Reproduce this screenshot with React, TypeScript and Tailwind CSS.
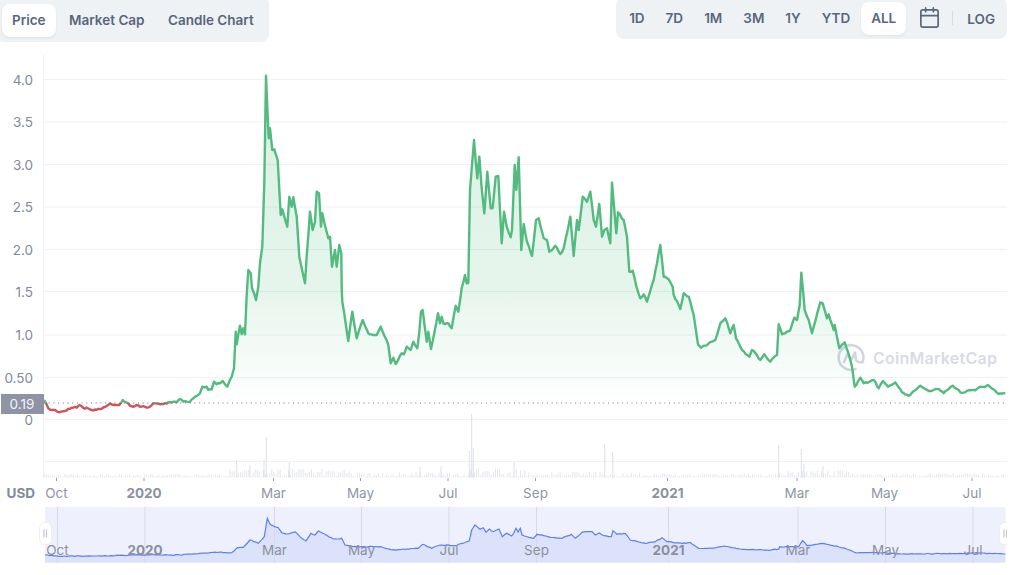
import { Calendar } from "lucide-react";

const pricePts = "44,400 48.3,408.3 53,410 59.3,412.3 65,411 71.7,407.7 76.7,407.7 79.3,405 83,407.7 91.7,410 100,409 108.3,405 110,403.3 115,405 119,405 122.7,400 128,403.3 132.7,406.7 136.7,405 140,406.7 150,406.7 153.3,403.3 160,404.3 170,402.3 176.7,402.3 180,399 183.3,401.7 190,401.7 195,396.7 200,393.3 202.3,386.7 206.7,386.7 208.3,390 211.7,389.3 214,381.7 216.7,384.3 220,383.3 222.7,381 227.3,386.7 231.7,376.7 234,368.3 235.7,331.7 236.7,344.3 240,325.7 241.7,334.3 243.3,328.3 245,334.3 246.7,295 248.3,270 250.7,273.3 252,288 256,300 258.3,286.7 260,263 262.3,246.7 264.3,183 266,75.7 267.7,116.7 268.7,138.3 270,128.3 272.3,150 274.3,149.3 277.7,160 280.7,215 282.3,209.3 287.3,226.7 289.3,196.7 291.7,206.7 293.3,197.3 296.7,216.7 299.3,256.7 305,283.3 306.7,256 310,211.7 312.7,230 315,221.7 316.7,191.7 319,193.3 321,226.7 322.3,213.3 328.3,238.3 330,236.7 332,266.7 335,250 336.7,266.7 339.3,245 341.3,253.3 341.7,288 342.3,301.7 344,311.7 348.3,341 352.3,311.7 356.7,338.3 362.7,320 368.3,333.3 376.7,335 380.7,326.7 388.3,345 390.7,363.3 393.3,357.7 395.7,364 401.7,353.3 404,354.3 406.7,346.7 410.7,350 413.3,341.7 417.3,348.3 419,335 421,311.7 422.7,310 426.7,341.7 428.3,331.7 431,349 438,313.3 440,323.3 441.7,316.7 443.3,323.3 448.3,323.3 451.7,328.3 455.7,305.7 458.3,311.7 461.7,288 465,275 466.7,283.3 468.3,283 470,190 474,140 477.3,178.3 479.3,156.7 481.7,188.3 484.3,213.3 487.3,171.7 490.7,208.3 492.7,208 495.7,176.7 498.3,176 501.7,243.3 504,211.7 506.7,226.7 510.7,237.3 512,230 514.7,165 516.3,190 518.7,157.3 521.3,250 523.7,224 527,241.7 532,256 536,220 538.7,218.3 543.7,238.3 547,240 549.3,251.7 552,250 555.3,245.7 560.3,254 563.7,248.3 570.3,216.7 573.7,256 577,220 578.7,230 582.7,196.7 587,201.7 590.3,191.7 593.7,220 596,226.7 599.3,204 602,236.7 604.3,230 607,228.3 610.3,243.3 612,182.7 616.3,233.3 618,212.3 623.7,220 627,236.7 629.3,271.7 632.7,270.7 636,285 640.3,298.3 643.7,294.3 647,301.7 653.7,280 660.3,245 663.7,276.7 668.7,279.3 672.7,286.7 673.7,295 680.3,309 683.7,293.3 688.7,296.7 693.7,315 698,344.3 701.3,347.7 712,341.7 715.3,340 720.3,323.3 725.3,318.3 730.3,333.3 733.7,325 736,338.3 742,350 749.3,356.7 752,350 757,355 760.3,360 764.3,354.3 770.3,361.7 777,355 778.7,324.3 782,334.3 790.3,330 794.3,317.7 797,320 799.7,305 801.3,272.7 804.7,310 808.7,320 812,333.3 820.3,302.3 822.7,303.3 827,318.3 828.7,314.3 833.7,330 834.7,325 839.3,348.3 844.7,342.3 848,352 852,366.7 854.7,386.7 860.3,377.7 863.7,383.3 873.7,380 878.7,388.3 883,381 888,386.7 895.3,382.3 902,392.3 908.7,395.7 920.3,385.7 928.7,391 938.7,389 943.7,393.3 952.7,385.7 960.3,392.3 973.7,390 988,385 998.7,394 1005.3,393";

const navPts = "45,555 60,556.3 93.3,556 133.3,555 180,555 200,553.3 213.3,552.3 231.7,552.7 237.3,547.7 243.3,547.3 250,540 258.3,543.3 264.3,536.7 267.3,518.3 270,524.3 278.3,527.7 281.7,532.7 288.3,534 295,531.7 300,536.7 306,541 311,533.3 315,535 318.3,531 325,534.3 333.3,539 341.7,538.3 345,545 353.3,546.7 363.3,546.7 380,546.7 391.7,550 406.7,549 418.3,548.3 422.7,544.3 431.7,548.3 440,545 455,545.7 469.3,541 471.7,530 475,525 480,529.3 483.3,527.7 486,532.3 489.3,529 493.3,531.7 499,529 502.3,536.7 506.7,533.3 511.7,536 513.7,533.3 516,528.3 518,532 520.3,528.3 522,535 527,536.7 533.7,538.3 537,534.3 550.3,537.3 562,538.3 571.3,534.3 575.3,538.3 582,532.3 592,531.7 595.3,535 599.3,533 603.7,535.7 611.3,536.7 613,530.7 617,534.3 625.3,533.3 630.3,540 645.3,543.3 655.3,541.7 662,537.7 667,541.7 682,543.3 690.3,542.7 698.7,548.3 712,548.3 723.7,546 742,549.3 768.7,550.3 778.7,549 779.7,546.7 798.7,546.7 802.7,540.7 807,545.7 822,543.3 845.3,548.3 855.3,552.7 878.7,552.7 902,554 945.3,553.7 978.7,553 1005.3,554";

const noise = (i: number) => (Math.abs(Math.sin(i * 12.9898) * 43758.5453) % 1) * 2 - 1;

// the traced points are too clean, add small daily wobble between them
function roughen(points: string, step: number, amount: number) {
  const pts = points.split(" ").map((p) => p.split(",").map(Number));
  const out: string[] = [];
  let n = 0;
  pts.forEach(([x, y], i) => {
    out.push(`${x},${y}`);
    const next = pts[i + 1];
    if (!next) return;
    const parts = Math.floor((next[0] - x) / step);
    for (let k = 1; k < parts; k++) {
      const t = k / parts;
      out.push(`${(x + (next[0] - x) * t).toFixed(1)},${(y + (next[1] - y) * t + noise(n++) * amount).toFixed(1)}`);
    }
  });
  return out.join(" ");
}

const priceLine = roughen(pricePts, 1.6, 0.9);
const navLine = roughen(navPts, 2, 0.4);

const yTicks = [
  { label: "4.0", y: 79.5 },
  { label: "3.5", y: 122 },
  { label: "3.0", y: 164.5 },
  { label: "2.5", y: 207 },
  { label: "2.0", y: 249.5 },
  { label: "1.5", y: 291.5 },
  { label: "1.0", y: 335 },
  { label: "0.50", y: 377.5 },
  { label: "0", y: 419.5 },
];

const xTicks = [
  { label: "Oct", x: 56.5 },
  { label: "2020", x: 144, bold: true },
  { label: "Mar", x: 273.5 },
  { label: "May", x: 360.5 },
  { label: "Jul", x: 448 },
  { label: "Sep", x: 535.5 },
  { label: "2021", x: 667.5, bold: true },
  { label: "Mar", x: 797 },
  { label: "May", x: 884.5 },
  { label: "Jul", x: 972 },
];

// tall volume bars read off the picture, the rest is noise under an envelope
const spikes: [number, number][] = [
  [236.7, 460], [266.3, 437], [264, 460], [289.3, 462], [250, 465], [469.3, 451], [471.7, 414], [473.3, 448],
  [514, 462], [604.7, 444], [612.7, 452], [778.7, 445], [801.3, 449], [804, 464], [823, 466], [441, 466], [420, 467],
];

function envelope(x: number) {
  if (x < 230) return 2.5;
  if (x < 350) return 8;
  if (x < 465) return 4;
  if (x < 530) return 9;
  if (x < 640) return 5;
  if (x < 775) return 3;
  if (x < 850) return 7;
  return 3.5;
}

const volumeBars: [number, number][] = [];
for (let i = 0; i < 460; i++) {
  const x = 44 + i * 2.09;
  volumeBars.push([x, 477.5 - (1 + Math.abs(noise(i)) * envelope(x))]);
}

function Tab({ label, active }: { label: string; active?: boolean }) {
  return (
    <button
      className={`h-[33px] px-2.5 rounded-lg text-[13.5px] font-semibold text-[#58667e] ${
        active ? "bg-white shadow-[0_1px_2px_rgba(88,102,126,0.12)]" : ""
      }`}
    >
      {label}
    </button>
  );
}

function PriceChart() {
  const areaPath = `M44,403 L${priceLine.replace(/ /g, " L")} L1005.3,403 Z`;
  const navArea = `M45,562.5 L${navLine.replace(/ /g, " L")} L1005.3,562.5 Z`;

  return (
    <svg width={1007} height={533} viewBox="0 42 1007 533" className="block">
      <defs>
        <linearGradient id="priceFill" gradientUnits="userSpaceOnUse" x1="0" y1="80" x2="0" y2="403">
          <stop offset="0" stopColor="#3fb56f" stopOpacity="0.2" />
          <stop offset="0.65" stopColor="#3fb56f" stopOpacity="0.13" />
          <stop offset="1" stopColor="#3fb56f" stopOpacity="0" />
        </linearGradient>
        <clipPath id="aboveBase">
          <rect x="0" y="42" width="1007" height="361" />
        </clipPath>
        <clipPath id="belowBase">
          <rect x="0" y="403" width="1007" height="30" />
        </clipPath>
      </defs>

      {yTicks.map((t) => (
        <g key={t.label}>
          <line x1="44" x2="1007" y1={t.y} y2={t.y} stroke="#eff1f5" />
          <text x="33" y={t.y} textAnchor="end" dominantBaseline="central" fontSize="13.5" fill="#808a9d">
            {t.label}
          </text>
        </g>
      ))}
      <line x1="44" x2="1007" y1="461.5" y2="461.5" stroke="#eff1f5" />
      <line x1="43.5" x2="43.5" y1="55" y2="478" stroke="#eff1f5" />

      {/* volume */}
      {volumeBars.map(([x, y], i) => (
        <line key={i} x1={x} x2={x} y1={y} y2="477.5" stroke="#e4e6ee" />
      ))}
      {spikes.map(([x, y]) => (
        <line key={x} x1={x} x2={x} y1={y} y2="477.5" stroke="#dcdfe8" />
      ))}

      {/* watermark */}
      <g transform="translate(838,344.5)" fill="none" stroke="#d2d5e0" strokeWidth="2.6" strokeLinecap="round" strokeLinejoin="round">
        <path d="M24.6 17.5 A12.4 12.4 0 1 0 17.5 24.6" />
        <path d="M6 17.5 L10 8.5 L13 16 L17 8 L18 15.5 Q19.5 18.5 24.6 17.5" />
      </g>
      <text x="873" y="358" dominantBaseline="central" fontSize="16" fontWeight="600" fill="#d9dbe5" letterSpacing="0.25">
        CoinMarketCap
      </text>

      {/* price */}
      <path d={areaPath} fill="url(#priceFill)" clipPath="url(#aboveBase)" />
      <polyline points={priceLine} fill="none" stroke="#54bb80" strokeWidth="2.4" strokeLinejoin="round" clipPath="url(#aboveBase)" />
      <polyline points={priceLine} fill="none" stroke="#d0545a" strokeWidth="2.4" strokeLinejoin="round" clipPath="url(#belowBase)" />
      <line x1="44" x2="1005" y1="403" y2="403" stroke="#6f7689" strokeDasharray="1 3.7" />

      <rect x="1" y="394" width="43" height="20" fill="#8f93a6" />
      <text x="22" y="404" textAnchor="middle" dominantBaseline="central" fontSize="13.5" fill="#f3f4f8">
        0.19
      </text>

      {/* x axis */}
      {xTicks.map((t) => (
        <g key={t.x}>
          <line x1={t.x} x2={t.x} y1="478" y2="481" stroke="#9aa1b3" />
          <text x={t.x} y="493" textAnchor="middle" dominantBaseline="central" fontSize="13.5" fontWeight={t.bold ? 700 : 400} fill={t.bold ? "#8b91a5" : "#8f96a8"}>
            {t.label}
          </text>
        </g>
      ))}
      <text x="6.5" y="493" dominantBaseline="central" fontSize="13.5" fontWeight="700" fill="#808a9d">
        USD
      </text>

      {/* navigator */}
      <rect x="45" y="507" width="960.5" height="56" fill="#eef1fd" />
      <path d={navArea} fill="#dde2fb" />
      {xTicks.map((t) => (
        <line key={t.x} x1={t.x + 1} x2={t.x + 1} y1="507" y2="563" stroke="#d6d9e7" />
      ))}
      <polyline points={navLine} fill="none" stroke="#5b7ff3" strokeWidth="1.2" />
      {xTicks.map((t) => (
        <text key={t.x} x={t.x + 1} y="550" textAnchor="middle" dominantBaseline="central" fontSize="13.5" fontWeight={t.bold ? 700 : 400} fill="#8b8f9e">
          {t.label}
        </text>
      ))}

      {/* navigator handles */}
      {[39.5, 999.5].map((x) => (
        <g key={x}>
          <rect x={x} y="522.5" width="12" height="22" rx="5" fill="#ffffff" stroke="#e6e8f1" strokeWidth="0.7" />
          <line x1={x + 4.5} x2={x + 4.5} y1="529.5" y2="537.5" stroke="#c3c7d6" strokeWidth="1.2" />
          <line x1={x + 7} x2={x + 7} y1="529.5" y2="537.5" stroke="#c3c7d6" strokeWidth="1.2" />
        </g>
      ))}
    </svg>
  );
}

export default function App() {
  return (
    <div className="w-[1024px] h-[575px] overflow-hidden bg-white font-['Inter',sans-serif]">
      <div className="h-[42px] w-[1007px] flex justify-between items-start">
        <div className="h-[46px] -mt-[4px] -ml-1 pl-1.5 pr-[5px] pt-2 rounded-lg bg-[#eff2f5] flex gap-[3.5px]">
          <Tab label="Price" active />
          <Tab label="Market Cap" />
          <Tab label="Candle Chart" />
        </div>
        <div className="h-[42px] -mt-[3px] pl-[3px] pr-[12px] pt-[5px] rounded-lg bg-[#eff2f5] flex items-start gap-px">
          <Tab label="1D" />
          <Tab label="7D" />
          <Tab label="1M" />
          <Tab label="3M" />
          <Tab label="1Y" />
          <Tab label="YTD" />
          <Tab label="ALL" active />
          <Calendar size={23} strokeWidth={1.75} className="ml-[11px] mt-[4px] text-[#58667e]" />
          <div className="ml-[10px] mt-[9px] w-px h-[14px] bg-[#d5d9e2]" />
          <span className="ml-[13px] mt-[7px] text-[13.5px] font-semibold text-[#58667e]">LOG</span>
        </div>
      </div>
      <PriceChart />
    </div>
  );
}
